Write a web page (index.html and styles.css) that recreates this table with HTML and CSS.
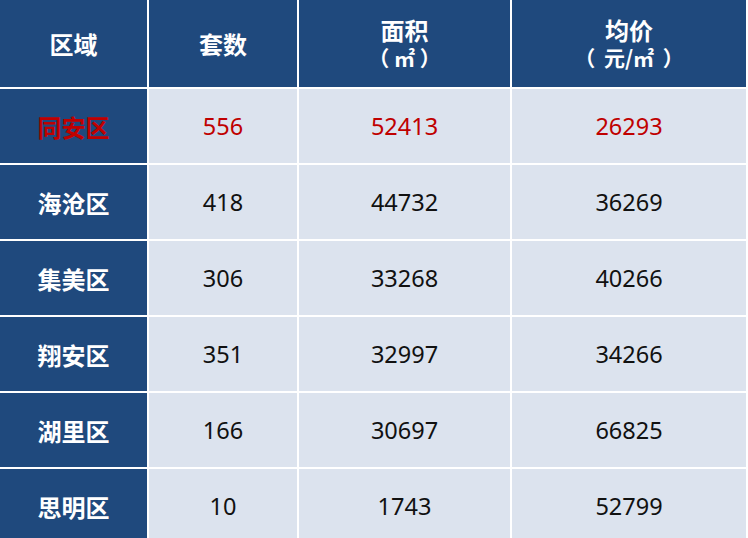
FILE: index.html
```html
<!DOCTYPE html>
<html lang="zh-CN">
<head>
<meta charset="utf-8">
<title>区域成交</title>
<link rel="stylesheet" href="styles.css">
</head>
<body>
<div class="table">
  <div class="cell head">区域</div>
  <div class="cell head">套数</div>
  <div class="cell head two"><span class="title">面积</span><span class="unit">（ ㎡ ）</span></div>
  <div class="cell head two"><span class="title">均价</span><span class="unit">（ <span class="pad">元/㎡</span> ）</span></div>

  <div class="cell name red">同安区</div>
  <div class="cell num red">556</div>
  <div class="cell num red">52413</div>
  <div class="cell num red">26293</div>

  <div class="cell name">海沧区</div>
  <div class="cell num">418</div>
  <div class="cell num">44732</div>
  <div class="cell num">36269</div>

  <div class="cell name">集美区</div>
  <div class="cell num">306</div>
  <div class="cell num">33268</div>
  <div class="cell num">40266</div>

  <div class="cell name">翔安区</div>
  <div class="cell num">351</div>
  <div class="cell num">32997</div>
  <div class="cell num">34266</div>

  <div class="cell name">湖里区</div>
  <div class="cell num">166</div>
  <div class="cell num">30697</div>
  <div class="cell num">66825</div>

  <div class="cell name">思明区</div>
  <div class="cell num">10</div>
  <div class="cell num">1743</div>
  <div class="cell num">52799</div>
</div>
</body>
</html>
```

FILE: styles.css
```css
html, body {
  margin: 0;
  padding: 0;
  background: #ffffff;
}

.table {
  display: grid;
  grid-template-columns: 147px 148px 211px 234px;
  grid-template-rows: 87px repeat(6, 74px);
  gap: 2px;
  width: 746px;
  background: #ffffff;
  font-family: "Noto Sans", "Noto Sans CJK SC", sans-serif;
}

.cell {
  display: flex;
  align-items: center;
  justify-content: center;
  background: #dce3ee;
  color: #111111;
}

.head {
  background: #1f497d;
  color: #ffffff;
  font-family: "Noto Sans CJK SC", sans-serif;
  font-weight: 700;
  font-size: 24px;
}

.head.two {
  flex-direction: column;
  padding-bottom: 1px;
}

.head .title {
  line-height: 28px;
}

.head .unit {
  font-size: 21px;
  line-height: 26px;
  white-space: pre;
}

.head .pad {
  padding: 0 4px;
}

.name {
  background: #1f497d;
  color: #ffffff;
  font-family: "Noto Sans CJK SC", sans-serif;
  font-weight: 700;
  font-size: 24px;
}

.num {
  font-size: 23.5px;
}

.red {
  color: #c00000;
}

.name.red {
  color: #c00000;
}
```
